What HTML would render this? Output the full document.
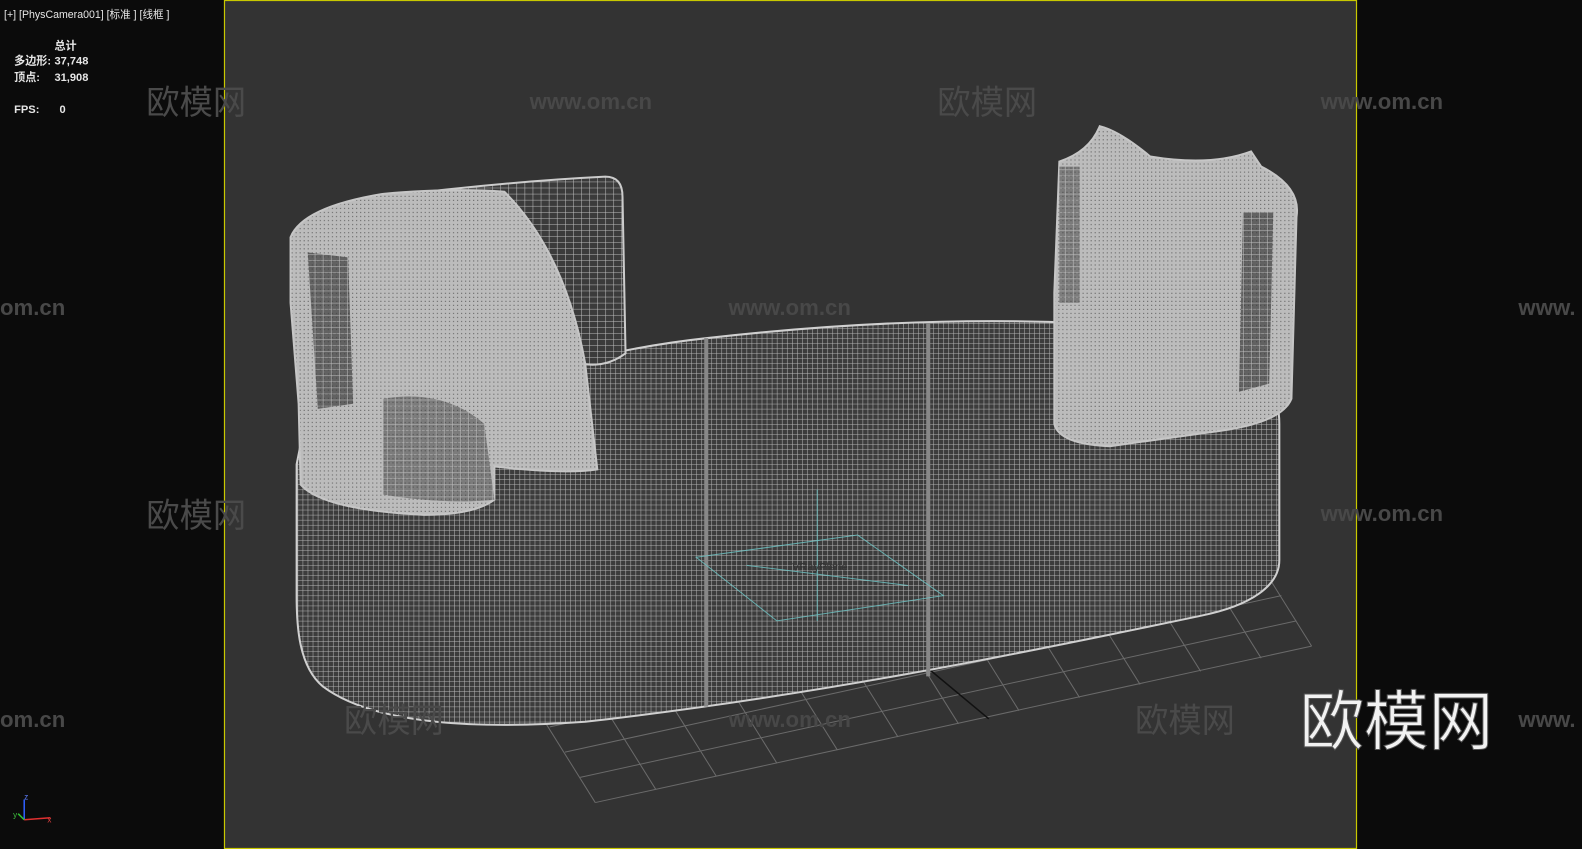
<!DOCTYPE html>
<html><head><meta charset="utf-8"><style>
html,body{margin:0;padding:0;background:#0b0b0b;width:1582px;height:849px;overflow:hidden}
svg{display:block}
</style></head><body>
<svg width="1582" height="849" viewBox="0 0 1568 841" preserveAspectRatio="none" xmlns="http://www.w3.org/2000/svg" font-family="Liberation Sans, Noto Sans CJK SC, sans-serif">
<defs>
<pattern id="g" width="5" height="5" patternUnits="userSpaceOnUse"><rect width="5" height="5" fill="#3c3c3c"/><path d="M0 0H5M0 0V5" stroke="#b8b8b8" stroke-width="1"/></pattern>
<pattern id="g2" width="8" height="6" patternUnits="userSpaceOnUse"><rect width="8" height="6" fill="#3b3b3b"/><path d="M0 0H8M0 0V6" stroke="#c2c2c2" stroke-width="1"/></pattern>
<pattern id="d" width="4" height="4" patternUnits="userSpaceOnUse"><rect width="4" height="4" fill="#bcbcbc"/><rect x="1" y="2" width="1" height="1" fill="#555"/></pattern>
</defs>
<rect width="1568" height="841" fill="#0b0b0b"/>
<rect x="222.5" y="0.5" width="1122" height="840" fill="#333" stroke="#c8c800" stroke-width="1.2"/>
<!-- floor grid -->
<g stroke="#6a6a6a" stroke-width="1" fill="none">
<path d="M590 795L1300 640M575 770L1285 615M560 745L1270 590M545 720L1255 565"/>
<path d="M540 715L590 795M600 702L650 782M660 689L710 769M720 676L770 756M780 663L830 743M840 650L890 730M900 637L950 717M960 624L1010 704M1020 611L1070 691M1080 598L1130 678M1140 585L1190 665M1200 572L1250 652M1250 560L1300 640"/>
</g>
<path d="M915 658L980 712" stroke="#111" stroke-width="1.5"/>
<!-- base -->
<path d="M298 440C420 400 560 350 700 335C850 318 1000 312 1150 325C1230 335 1268 370 1268 420L1268 555C1268 580 1240 600 1190 610C1000 650 800 690 580 715C440 725 360 710 320 680C296 660 294 620 294 590L294 460Z" fill="url(#g)" stroke="#d0d0d0" stroke-width="2"/>
<path d="M700 335L700 700M920 320L920 670" stroke="#888" stroke-width="4"/>
<!-- left back pillow -->
<path d="M380 195Q500 180 600 175Q617 175 617 195L620 350Q600 365 575 360L380 360Z" fill="url(#g2)" stroke="#ccc" stroke-width="2"/>
<!-- left arm -->
<path d="M288 235Q300 205 380 192Q450 186 500 190Q560 250 580 360L592 465Q560 470 490 462L490 495Q470 510 420 510Q320 505 298 480L296 400L288 300Z" fill="url(#d)" stroke="#c6c6c6" stroke-width="2"/>
<path d="M305 250L345 255L350 400L315 405Z" fill="url(#g2)" opacity=".7"/>
<path d="M380 395Q440 385 480 420L490 495Q440 500 380 490Z" fill="url(#g2)" opacity=".5"/>
<!-- right arm -->
<path d="M1050 160Q1080 150 1090 125Q1110 130 1140 155Q1200 165 1240 150L1250 165Q1290 185 1285 215L1280 395Q1270 420 1200 428L1100 442Q1050 440 1045 420L1045 290Z" fill="url(#d)" stroke="#c6c6c6" stroke-width="2"/>
<path d="M1050 165L1070 165L1070 300L1050 300Z" fill="url(#g2)" opacity=".5"/>
<path d="M1232 210L1262 210L1258 380L1228 388Z" fill="url(#g2)" opacity=".7"/>
<!-- vray plane -->
<g stroke="#6fc7c7" stroke-width="1" fill="none" opacity=".8">
<path d="M690 552L850 530L935 590L770 615Z"/><path d="M810 485L810 615M740 560L900 580"/>
</g>
<text x="785" y="565" font-size="11" fill="#333">VRayPlane</text>
<!-- watermarks -->
<g fill="#4a4a4a" font-size="33">
<text x="145" y="113">欧模网</text><text x="929" y="113">欧模网</text>
<text x="145" y="522">欧模网</text><text x="341" y="725">欧模网</text><text x="1125" y="725">欧模网</text>
</g>
<g fill="#484848" font-size="22" font-weight="bold">
<text x="525" y="108">www.om.cn</text><text x="1309" y="108">www.om.cn</text>
<text x="722" y="312">www.om.cn</text><text x="0" y="312">om.cn</text><text x="1505" y="312">www.</text>
<text x="1309" y="516">www.om.cn</text><text x="722" y="720">www.om.cn</text><text x="0" y="720">om.cn</text><text x="1505" y="720">www.</text>
</g>
<text x="1288" y="737" font-size="64" fill="#f2f2f2" stroke="#555" stroke-width="1">欧模网</text>
<!-- HUD -->
<g fill="#e6e6e6" font-size="11">
<text x="4" y="18" font-size="10.5">[+]  [PhysCamera001]  [标准 ]  [线框 ]</text>
<text x="54" y="49" font-weight="bold">总计</text>
<text x="14" y="64" font-weight="bold">多边形:</text><text x="54" y="64" font-weight="bold">37,748</text>
<text x="14" y="80" font-weight="bold">顶点:</text><text x="54" y="80" font-weight="bold">31,908</text>
<text x="14" y="112" font-weight="bold">FPS:</text><text x="59" y="112" font-weight="bold">0</text>
</g>
<g stroke-width="1.5"><path d="M24 812V792" stroke="#3060ff"/><path d="M24 812L50 810" stroke="#e03030"/><path d="M24 812L18 806" stroke="#30c030"/></g>
<text x="24" y="792" font-size="8" fill="#6080ff">z</text><text x="47" y="815" font-size="8" fill="#e04040">x</text><text x="13" y="810" font-size="8" fill="#40c040">y</text>
</svg>
</body></html>
